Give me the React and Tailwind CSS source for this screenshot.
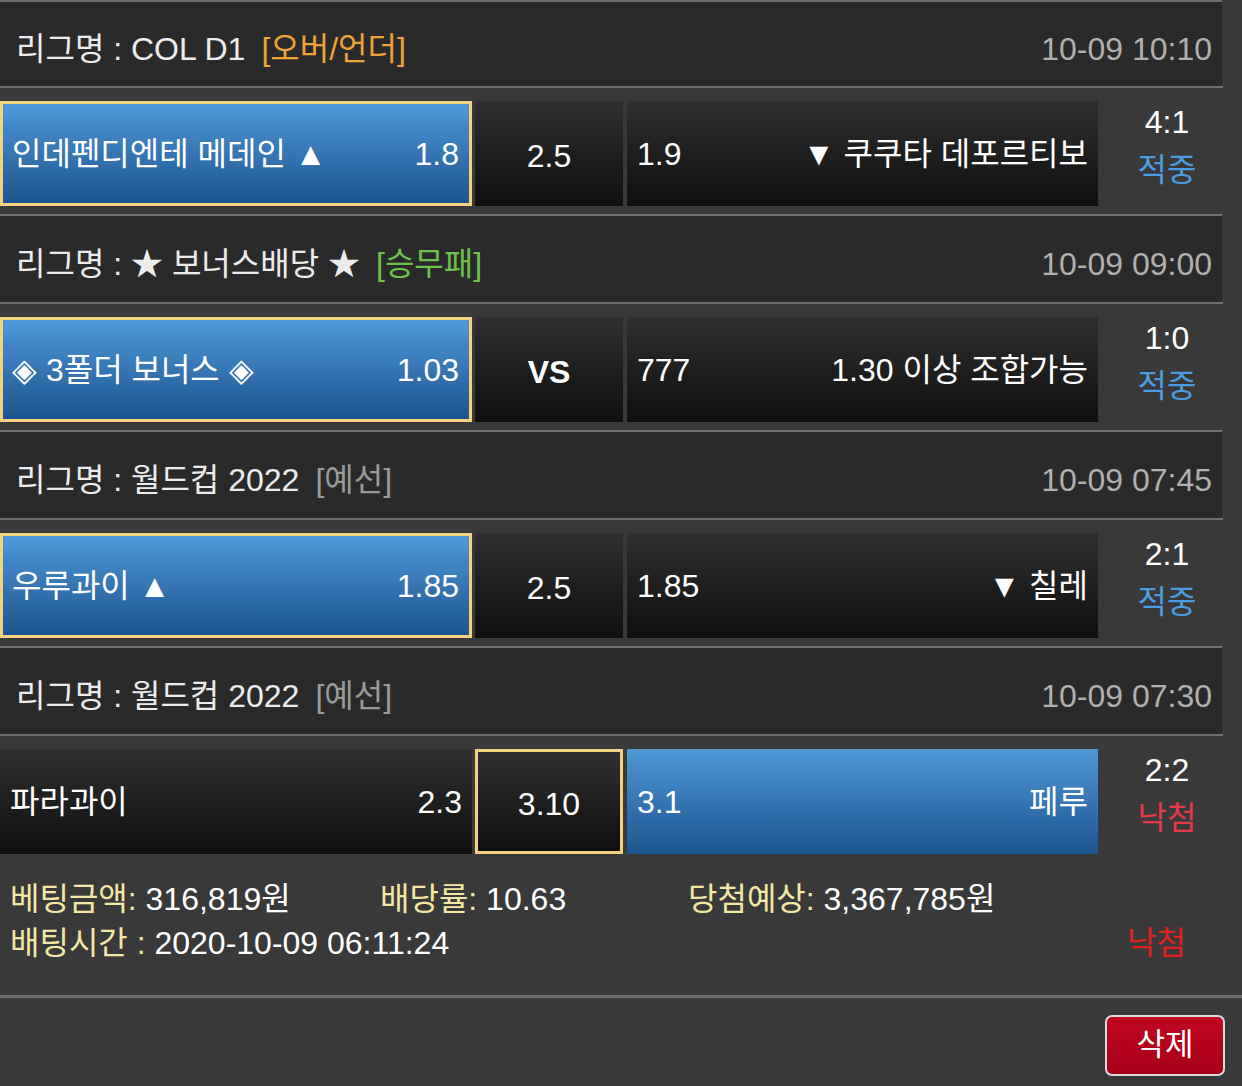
import React from "react";

const FONT = { fontFamily: '"Liberation Sans", "Noto Sans CJK KR", sans-serif' };

const groups = [
  {
    league: "리그명 : COL D1",
    tag: "[오버/언더]",
    tagClass: "text-[#f0a236]",
    time: "10-09 10:10",
    home: "인데펜디엔테 메데인 ▲",
    homeOdd: "1.8",
    mid: "2.5",
    awayOdd: "1.9",
    away: "▼ 쿠쿠타 데포르티보",
    pick: "home",
    score: "4:1",
    result: "적중",
  },
  {
    league: "리그명 : ★ 보너스배당 ★",
    tag: "[승무패]",
    tagClass: "text-[#6cc24a]",
    time: "10-09 09:00",
    home: "◈ 3폴더 보너스 ◈",
    homeOdd: "1.03",
    mid: "VS",
    midBold: true,
    awayOdd: "777",
    away: "1.30 이상 조합가능",
    pick: "home",
    score: "1:0",
    result: "적중",
  },
  {
    league: "리그명 : 월드컵 2022",
    tag: "[예선]",
    tagClass: "text-[#9a9a9a]",
    time: "10-09 07:45",
    home: "우루과이 ▲",
    homeOdd: "1.85",
    mid: "2.5",
    awayOdd: "1.85",
    away: "▼ 칠레",
    pick: "home",
    score: "2:1",
    result: "적중",
  },
  {
    league: "리그명 : 월드컵 2022",
    tag: "[예선]",
    tagClass: "text-[#9a9a9a]",
    time: "10-09 07:30",
    home: "파라과이",
    homeOdd: "2.3",
    mid: "3.10",
    awayOdd: "3.1",
    away: "페루",
    pick: "draw",
    awayBlue: true,
    score: "2:2",
    result: "낙첨",
  },
];

const dark = "bg-gradient-to-b from-[#303030] to-[#0f0f0f]";
const blue = "bg-gradient-to-b from-[#4f98d7] to-[#1b5590]";

function Header({ g, first }) {
  return (
    <div
      className={`w-[1222px] ${first ? "h-[86px]" : "h-[88px]"} border-t-2 border-[#6f6f6f] bg-[#2a2a2a] flex items-center justify-between pl-[16px] pr-[10px] pt-[10px] text-[32px]`}
    >
      <div className="flex items-center">
        <span className="text-[#ececec]">{g.league}</span>
        <span className={`ml-[16px] ${g.tagClass}`}>{g.tag}</span>
      </div>
      <span className="text-[#b0b0b0]">{g.time}</span>
    </div>
  );
}

function Match({ g }) {
  const homeSel = g.pick === "home";
  const drawSel = g.pick === "draw";
  return (
    <div
      className="w-[1242px] h-[128px] border-t-2 border-[#6f6f6f] pt-[13px] flex text-[32px] text-white"
      style={{ borderImage: "linear-gradient(to right, #6f6f6f 1222px, transparent 1222px) 1" }}
    >
      <div
        className={`w-[472px] h-[105px] flex items-center justify-between pt-[1px] ${
          homeSel ? `${blue} border-[3px] border-[#f4d17f] pl-[9px] pr-[10px]` : `${dark} pl-[10px] pr-[10px]`
        }`}
      >
        <span>{g.home}</span>
        <span>{g.homeOdd}</span>
      </div>
      <div
        className={`ml-[3px] w-[148px] h-[105px] flex items-center justify-center pt-[4px] ${dark} ${
          drawSel ? "border-[3px] border-[#f4d17f]" : ""
        } ${g.midBold ? "font-bold" : ""}`}
      >
        {g.mid}
      </div>
      <div
        className={`ml-[4px] w-[471px] h-[105px] flex items-center justify-between pl-[10px] pr-[10px] pt-[1px] ${
          g.awayBlue ? blue : dark
        }`}
      >
        <span>{g.awayOdd}</span>
        <span>{g.away}</span>
      </div>
      <div className="w-[138px] h-[105px] flex flex-col items-center pt-[1px]">
        <span className="leading-[40px]">{g.score}</span>
        <span
          className={`leading-[56px] ${g.result === "적중" ? "text-[#4a9ce2]" : "text-[#e43a48]"}`}
        >
          {g.result}
        </span>
      </div>
    </div>
  );
}

export default function App() {
  return (
    <div className="w-[1242px] h-[1086px] bg-[#393939] overflow-hidden" style={FONT}>
      {groups.map((g, i) => (
        <div key={i}>
          <Header g={g} first={i === 0} />
          <Match g={g} />
        </div>
      ))}
      <div className="h-[133px] pl-[10px] pt-[15px] text-[32px] text-white">
        <div className="flex h-[44px] items-center">
          <span className="w-[370px]">
            <span className="text-[#f3e7a4]">베팅금액: </span>316,819원
          </span>
          <span className="w-[308px]">
            <span className="text-[#f3e7a4]">배당률: </span>10.63
          </span>
          <span>
            <span className="text-[#f3e7a4]">당첨예상: </span>3,367,785원
          </span>
        </div>
        <div className="flex h-[44px] items-center justify-between pr-[56px]">
          <span>
            <span className="text-[#f3e7a4]">배팅시간 : </span>2020-10-09 06:11:24
          </span>
          <span className="text-[#e0201f]">낙첨</span>
        </div>
      </div>
      <div className="border-t-[3px] border-[#6f6f6f] flex justify-end pt-[17px] pr-[17px]">
        <button
          className="w-[120px] h-[61px] rounded-[7px] border-2 border-[#dcdcdc] bg-gradient-to-b from-[#c0061f] to-[#a80018] text-white text-[31px] flex items-center justify-center"
          style={FONT}
        >
          삭제
        </button>
      </div>
    </div>
  );
}
